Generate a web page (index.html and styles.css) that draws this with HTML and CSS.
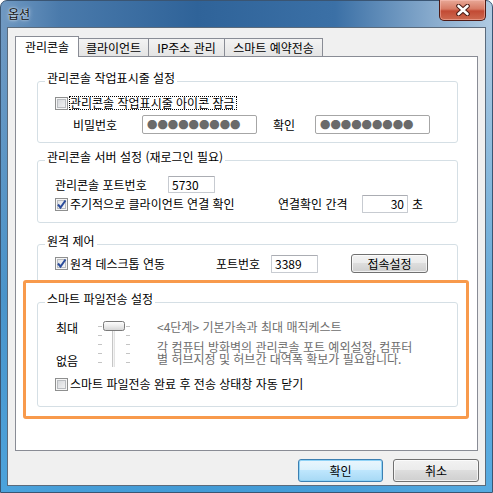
FILE: index.html
```html
<!DOCTYPE html>
<html lang="ko">
<head>
<meta charset="utf-8">
<title>옵션</title>
<link rel="stylesheet" href="styles.css">
</head>
<body>
<div class="window">
  <div class="titlebar">
    <span class="title">옵션</span>
    <div class="close">
      <svg width="16" height="12" viewBox="0 0 16 12">
        <path d="M3.5 2 L12.5 10 M12.5 2 L3.5 10" stroke="#4a1c16" stroke-width="4.6" stroke-linecap="round" fill="none"/>
        <path d="M3.5 2 L12.5 10 M12.5 2 L3.5 10" stroke="#ffffff" stroke-width="2.6" stroke-linecap="round" fill="none"/>
      </svg>
    </div>
  </div>
  <div class="client">
    <div class="tabs">
      <div class="tab active t1">관리콘솔</div>
      <div class="tab t2">클라이언트</div>
      <div class="tab t3">IP주소 관리</div>
      <div class="tab t4">스마트 예약전송</div>
    </div>
    <div class="panel">
      <fieldset class="group g1">
        <legend>관리콘솔 작업표시줄 설정</legend>
        <div class="row r-lock">
          <span class="cb"></span><span class="focus">관리콘솔 작업표시줄 아이콘 잠금</span>
        </div>
        <div class="row r-pw">
          <span class="lbl w-pw">비밀번호</span>
          <span class="field pw">●●●●●●●●●</span>
          <span class="lbl w-ok">확인</span>
          <span class="field pw">●●●●●●●●●</span>
        </div>
      </fieldset>

      <fieldset class="group g2">
        <legend>관리콘솔 서버 설정 (재로그인 필요)</legend>
        <div class="row r-port">
          <span class="lbl w-port">관리콘솔 포트번호</span>
          <span class="field num n-port">5730</span>
        </div>
        <div class="row r-poll">
          <span class="cbwrap w-poll"><span class="cb checked"><svg width="11" height="11" viewBox="0 0 11 11"><path d="M2 5.5 L4.5 8.5 L9.5 1.5" stroke="#2b4c9b" stroke-width="2" fill="none"/></svg></span><span class="cbtext">주기적으로 클라이언트 연결 확인</span></span>
          <span class="lbl w-int">연결확인 간격</span>
          <span class="field num n-int">30</span>
          <span class="lbl unit">초</span>
        </div>
      </fieldset>

      <fieldset class="group g3">
        <legend>원격 제어</legend>
        <div class="row r-remote">
          <span class="cbwrap w-remote"><span class="cb checked"><svg width="11" height="11" viewBox="0 0 11 11"><path d="M2 5.5 L4.5 8.5 L9.5 1.5" stroke="#2b4c9b" stroke-width="2" fill="none"/></svg></span><span class="cbtext">원격 데스크톱 연동</span></span>
          <span class="lbl w-rport">포트번호</span>
          <span class="field num n-rport">3389</span>
          <button class="btn small">접속설정</button>
        </div>
      </fieldset>

      <fieldset class="group g4">
        <legend>스마트 파일전송 설정</legend>
        <div class="slider-sec">
          <div class="levels"><span>최대</span><span>없음</span></div>
          <svg class="slider" width="36" height="50" viewBox="0 0 36 50">
            <defs>
              <linearGradient id="tg" x1="0" y1="0" x2="0" y2="1">
                <stop offset="0" stop-color="#ffffff"/>
                <stop offset="0.5" stop-color="#ececec"/>
                <stop offset="1" stop-color="#d4d4d4"/>
              </linearGradient>
            </defs>
            <g fill="#c4c4c4">
              <rect x="2" y="7" width="4" height="1"/><rect x="30" y="7" width="4" height="1"/>
              <rect x="2" y="16" width="4" height="1"/><rect x="30" y="16" width="4" height="1"/>
              <rect x="2" y="25" width="4" height="1"/><rect x="30" y="25" width="4" height="1"/>
              <rect x="2" y="34" width="4" height="1"/><rect x="30" y="34" width="4" height="1"/>
              <rect x="2" y="43" width="4" height="1"/><rect x="30" y="43" width="4" height="1"/>
            </g>
            <rect x="16" y="10" width="3" height="38" fill="#f4f4f4"/>
            <rect x="16" y="10" width="1" height="38" fill="#c6c6c6"/>
            <rect x="18" y="10" width="1" height="38" fill="#e2e2e2"/>
            <rect x="7.5" y="2.5" width="21" height="9" rx="2" fill="url(#tg)" stroke="#7a7a7a"/>
          </svg>
          <div class="desc">
            <div class="l1">&lt;4단계&gt; 기본가속과 최대 매직케스트</div>
            <div class="l2">각 컴퓨터 방화벽의 관리콘솔 포트 예외설정, 컴퓨터<br>별 허브지정 및 허브간 대역폭 확보가 필요합니다.</div>
          </div>
        </div>
        <div class="row r-close">
          <span class="cb"></span><span class="cbtext">스마트 파일전송 완료 후 전송 상태창 자동 닫기</span>
        </div>
      </fieldset>

      <div class="highlight"></div>
    </div>
    <div class="buttons">
      <button class="btn ok">확인</button>
      <button class="btn cancel">취소</button>
    </div>
  </div>
</div>
</body>
</html>
```
FILE: styles.css
```css
* { box-sizing: border-box; }
html, body { margin: 0; padding: 0; }
body {
  width: 493px;
  height: 493px;
  overflow: hidden;
  background: #ffffff;
  font-family: "Noto Sans CJK KR", "Noto Sans", sans-serif;
  font-size: 12px;
  color: #000;
}

.window {
  width: 493px;
  height: 493px;
  border: 1px solid #3a5573;
  border-radius: 7px 7px 0 0;
  padding: 0 6px 6px;
  background:
    linear-gradient(to bottom, rgba(40, 140, 210, 0) 0px, rgba(40, 140, 210, 0) 30px, rgba(45, 145, 210, 0.55) 60%, rgba(70, 165, 225, 0.85) 100%),
    linear-gradient(to right, #7099c2 0%, #4a7aab 12%, #2f6399 40%, #3b70a6 68%, #88abcd 88%, #b0cbe2 100%);
}

.titlebar {
  height: 26px;
  display: flex;
}
.title {
  padding-left: 1px;
  line-height: 26px;
  color: #111;
  text-shadow: 0 0 5px rgba(255, 255, 255, 0.8), 0 0 2px rgba(255, 255, 255, 0.8);
}
.close {
  margin-left: auto;
  margin-top: -1px;
  width: 47px;
  height: 21px;
  border: 1px solid #4e1a14;
  border-top: none;
  border-radius: 0 0 5px 5px;
  background: linear-gradient(to bottom, #e8a897 0%, #d77a64 45%, #c24a34 55%, #cd6a50 100%);
  box-shadow: inset 0 0 0 1px rgba(255, 200, 190, 0.45);
  display: flex;
  align-items: center;
  justify-content: center;
}

.client {
  height: 459px;
  border: 1px solid #5b6b7c;
  background: #f0f0f0;
  padding: 8px 7px 0 7px;
}

.tabs {
  display: flex;
  align-items: flex-end;
  height: 20px;
}
.tab {
  height: 18px;
  margin-left: -1px;
  border: 1px solid #898c95;
  border-bottom: none;
  background: linear-gradient(to bottom, #f3f3f3, #e4e4e4);
  display: flex;
  align-items: center;
  justify-content: center;
  line-height: 14px;
  white-space: nowrap;
}
.tab.active {
  height: 21px;
  margin-left: 0;
  margin-bottom: -1px;
  padding-bottom: 1px;
  background: #ffffff;
  position: relative;
  z-index: 1;
}
.t1 { width: 64px; }
.t2 { width: 71px; }
.t3 { width: 77px; }
.t4 { width: 99px; }

.panel {
  height: 395px;
  border: 1px solid #898c95;
  background: #ffffff;
  padding: 0 0 0 21px;
  position: relative;
}

.group {
  width: 421px;
  margin: 0;
  padding: 0;
  min-width: 0;
  border: 1px solid #d5dfe5;
  border-radius: 3px;
}
.group legend {
  margin-left: 7px;
  padding: 0 2px 6px;
  line-height: 14px;
}
.g1 { margin-top: 14px; padding-bottom: 8px; }
.g2 { margin-top: 7px; padding-bottom: 9px; }
.g3 { margin-top: 11px; padding-bottom: 9px; }
.g4 { margin-top: 9px; padding-bottom: 15px; }

.row {
  display: flex;
  align-items: center;
  white-space: nowrap;
  line-height: 14px;
}
.lbl { display: block; }

.cb {
  width: 13px;
  height: 13px;
  flex: none;
  border: 1px solid #8e8f8f;
  background: linear-gradient(135deg, #cfd2d6 0%, #e6e7e9 55%, #f7f7f7 100%);
  box-shadow: inset 0 0 0 1px #f6f6f6, inset 0 0 0 2px #b9bcc0;
  display: flex;
  align-items: center;
  justify-content: center;
}
.cb.checked {
  background: linear-gradient(135deg, #dcdee1 0%, #eeeff0 55%, #fafafa 100%);
}
.cb svg { display: block; }
.cbwrap { display: flex; align-items: center; }
.cbtext { margin-left: 2px; }
.focus {
  margin-left: 1px;
  border: 1px dotted #000;
  line-height: 12px;
  padding-right: 1px;
}

.field {
  display: flex;
  align-items: center;
  background: #ffffff;
  border: 1px solid #abadb3;
  border-radius: 2px;
}
.pw {
  width: 115px;
  height: 19px;
  padding-left: 4px;
  color: #6a6a6a;
  font-size: 10.4px;
  border-color: #a6a6a6;
}
.num {
  height: 17px;
  padding-left: 3px;
  border-color: #c7cbd1;
  border-top-color: #abadb3;
  border-radius: 1px;
}

.r-lock { margin-top: 5px; height: 14px; padding-left: 17px; }
.r-pw { margin-top: 5px; height: 19px; padding-left: 35px; }
.w-pw { width: 69px; }
.w-ok { width: 42px; margin-left: 16px; }

.r-port { margin-top: 6px; height: 17px; padding-left: 17px; }
.w-port { width: 113px; }
.n-port { width: 47px; }

.r-poll { margin-top: 2px; height: 18px; padding-left: 17px; }
.w-poll { width: 223px; }
.w-int { width: 84px; }
.n-int { width: 46px; height: 18px; justify-content: flex-end; padding-left: 0; padding-right: 3px; }
.unit { margin-left: 4px; }

.r-remote { margin-top: 0; height: 19px; padding-left: 17px; }
.w-remote { width: 161px; }
.w-rport { width: 55px; }
.n-rport { width: 47px; height: 18px; }

.btn {
  height: 23px;
  padding: 0;
  font-family: inherit;
  font-size: 12px;
  color: #000;
  border: 1px solid #707070;
  border-radius: 3px;
  background: linear-gradient(to bottom, #f2f2f2 0%, #ebebeb 49%, #dddddd 50%, #cfcfcf 100%);
  box-shadow: inset 0 0 0 1px rgba(255, 255, 255, 0.7);
}
.btn.small {
  width: 77px;
  height: 19px;
  margin-left: 33px;
  line-height: 14px;
}

.slider-sec {
  margin-top: 7px;
  height: 50px;
  display: flex;
  padding-left: 18px;
}
.levels {
  width: 40px;
  display: flex;
  flex-direction: column;
  justify-content: space-between;
  padding: 2px 0 1px;
  line-height: 14px;
}
.slider { display: block; flex: none; }
.desc {
  margin-left: 25px;
  padding-top: 1px;
  color: #6d6d6d;
  white-space: nowrap;
}
.desc .l1 { line-height: 14px; }
.desc .l2 { margin-top: 7px; line-height: 12px; }

.r-close { margin-top: 8px; height: 14px; padding-left: 17px; }

.highlight {
  position: absolute;
  left: 7px;
  top: 223px;
  width: 446px;
  height: 139px;
  border: 3px solid #f89a4c;
  border-radius: 3px;
  pointer-events: none;
}

.buttons {
  display: flex;
  justify-content: flex-end;
  gap: 10px;
  margin-top: 8px;
  margin-right: -1px;
}
.btn.ok {
  width: 85px;
  border-color: #3c7fb1;
  background: linear-gradient(to bottom, #eaf6fd 0%, #d9f0fc 49%, #bee6fd 50%, #a7d9f5 100%);
  box-shadow: inset 0 0 0 1px #8fd3f7;
}
.btn.cancel { width: 86px; }
```
